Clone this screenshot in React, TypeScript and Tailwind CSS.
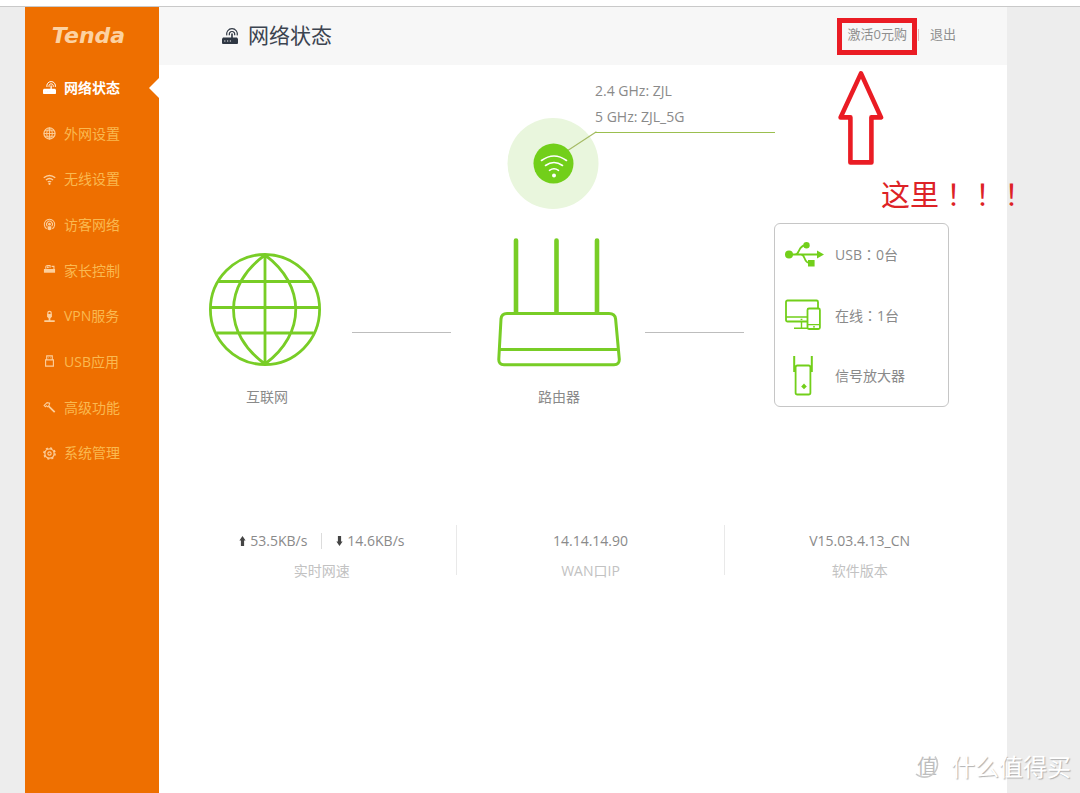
import type { ReactNode } from "react"

const RouterIcon = ({ className }: { className: string }) => (
    <svg viewBox="0 0 16 16" className={className} fill="none" stroke="currentColor" strokeWidth="1.4">
        <path d="M1 9.6H15L16 10.8V15Q16 16 15 16H1Q0 16 0 15V10.8Z" fill="currentColor" stroke="none" />
        <path d="M10 5.6V10" strokeWidth="1.6" />
        <path d="M7.5 7.2A2.7 2.7 0 1 1 12.5 7.2M4.9 7.4A5.3 5.3 0 1 1 15.1 7.4" strokeWidth="1.2" />
        <path d="M2.2 13H3.4M5 13H6.2M7.8 13H9" stroke="#f7f7f7" strokeWidth="1.1" />
    </svg>
)

const menu: { name: string, icon: ReactNode }[] = [
    {
        name: "外网设置",
        icon: <>
            <circle cx="7" cy="7" r="6" />
            <path d="M1 7H13M7 1V13M2 4H12M2 10H12M7 1C3 4 3 10 7 13M7 1C11 4 11 10 7 13" strokeWidth="1" />
        </>,
    },
    {
        name: "无线设置",
        icon: <>
            <path d="M.8 5.2Q7 0 13.2 5.2M3.2 7.6Q7 4.4 10.8 7.6M5.2 9.8Q7 8.2 8.8 9.8" strokeWidth="1.5" />
            <circle cx="7" cy="11.6" r="1.2" fill="currentColor" stroke="none" />
        </>,
    },
    {
        name: "访客网络",
        icon: <>
            <path d="M4 11.6A5.6 5.6 0 1 1 10 11.6M4.6 8.8A3.2 3.2 0 1 1 9.4 8.8" strokeWidth="1.1" />
            <circle cx="7" cy="6.6" r="1.5" fill="currentColor" stroke="none" />
            <path d="M5 9H9V12.4Q7 13.8 5 12.4Z" fill="currentColor" stroke="none" />
        </>,
    },
    {
        name: "家长控制",
        icon: <>
            <path d="M1 5.4H13V9.4H1Z" fill="currentColor" stroke="none" />
            <path d="M3 5V3Q3 1.6 5 1.6H7.6V4M9.2 2.6H11.8V6" strokeWidth="1.2" />
            <circle cx="5.2" cy="3.6" r="1.1" fill="currentColor" stroke="none" />
        </>,
    },
    {
        name: "VPN服务",
        icon: <>
            <path d="M5.2 4.4V3.2A1.8 1.8 0 0 1 8.8 3.2V4.4" />
            <path d="M4.4 4.2H9.6V7.4L8 9H6L4.4 7.4Z" fill="currentColor" stroke="none" />
            <path d="M7 8V11M1.4 12H12.6" strokeWidth="1.8" />
        </>,
    },
    {
        name: "USB应用",
        icon: <path d="M4 5V1H10V5M2.8 5.2H11.2V12H2.8ZM5.6 3H6.2M7.8 3H8.4" strokeWidth="1.2" />,
    },
    {
        name: "高级功能",
        icon: <>
            <path d="M1.2 4.8L4.4 1.8L7.2 2.4L6.6 4.6L4.8 6.2L3.6 5L2.6 6.2Z" strokeWidth="1.1" />
            <path d="M6 5.6L12.6 12" strokeWidth="1.9" />
        </>,
    },
    {
        name: "系统管理",
        icon: <>
            <circle cx="7" cy="7" r="5" />
            <circle cx="7" cy="7" r="6" strokeWidth="1.6" strokeDasharray="2.2 2.512" />
            <circle cx="7" cy="7" r="1.8" strokeWidth="1.2" />
        </>,
    },
]

const Sidebar = () => (
    <aside className="w-[134px] shrink-0 bg-[#ee6f00]">
        <div className="h-[58px] flex items-center justify-center pr-[7px] text-[22px] font-bold italic text-[#fcd2a2] font-['DejaVu_Sans',sans-serif]">
            Tenda
        </div>
        <ul className="flex flex-col h-[411px] text-sm">
            <li className="relative flex-1 flex items-center">
                <a href="#status" className="flex items-center gap-2 pl-[18px] font-bold text-white">
                    <RouterIcon className="size-[13px]" />
                    网络状态
                </a>
                <svg viewBox="0 0 10 20" className="absolute right-0 w-[10px] h-5">
                    <path d="M10 0V20L0 10Z" fill="#fff" />
                </svg>
            </li>
            {menu.map(item =>
                <li key={item.name} className="flex-1 flex items-center">
                    <a href="#" className="flex items-center gap-2 pl-[18px] text-[#fab950]">
                        <svg viewBox="0 0 14 14" className="size-[13px] text-[#fccf9c]" fill="none" stroke="currentColor" strokeWidth="1.3">
                            {item.icon}
                        </svg>
                        {item.name}
                    </a>
                </li>
            )}
        </ul>
    </aside>
)

const Header = () => (
    <header className="relative h-[58px] flex items-center justify-between bg-[#f7f7f7] pl-[63px] pr-[51px] pb-[3px]">
        <h1 className="flex items-center gap-[10px] text-[21px] text-[#3c4450]">
            <RouterIcon className="size-4 mt-[3px] text-[#2f3743]" />
            网络状态
        </h1>
        <nav className="flex items-center text-[13px] text-[#8f8f8f]">
            <button type="button">激活0元购</button>
            <span className="mx-[11px] h-3 w-px bg-[#e3b5b5]" />
            <button type="button">退出</button>
        </nav>

        <div className="absolute top-[11px] right-[90px] w-20 h-[37px] border-5 border-[#ea1c24]" />
        <svg viewBox="0 0 46 96" className="absolute top-[63px] right-[123px] w-[46px] h-24" fill="none" stroke="#ea1c24" strokeWidth="4.6" strokeLinejoin="round">
            <path d="M23 3.4L43 47.4H33.4V92.4H12.4V47.4H2.6Z" />
        </svg>
        <p className="absolute top-[166px] -right-[19px] text-[29px] leading-10 whitespace-nowrap text-[#dd2226] font-['Noto_Sans_CJK_TC',sans-serif]">
            这里！！！
        </p>
    </header>
)

const WifiCallout = () => (
    <div className="flex justify-center mt-[13px] pl-[116px]">
        <svg viewBox="0 0 92 92" className="size-[92px] mt-10 shrink-0" fill="none" stroke="#fff" strokeLinecap="round">
            <circle cx="46" cy="45.5" r="45.5" fill="#e9f6dd" stroke="none" />
            <path d="M60 33L89 14" stroke="#a6bb66" strokeWidth="1.2" />
            <circle cx="46.5" cy="45.5" r="20" fill="#72cf1a" stroke="none" />
            <path d="M34.5 42.5Q47 33.5 59.5 42.5M38.5 47.5Q47 41.5 55.5 47.5M42.5 52.3Q47 49.3 51.5 52.3" strokeWidth="1.6" />
            <circle cx="47" cy="57.4" r="2" fill="#fff" stroke="none" />
        </svg>
        <div className="-ml-1 w-[180px] h-[55px] border-b border-[#9bbf4f] leading-[26px]">
            <p>2.4 GHz: ZJL</p>
            <p>5 GHz: ZJL_5G</p>
        </div>
    </div>
)

const Colon = () => <span className="font-['Noto_Sans_CJK_TC',sans-serif]">：</span>

const Devices = () => (
    <ul className="w-[175px] h-[184px] shrink-0 flex flex-col justify-between pl-[10px] py-[10px] rounded-md border border-[#c6c6c6]">
        <li className="flex items-center gap-[11px] h-10">
            <svg viewBox="0 0 39 40" className="w-[39px] h-10" fill="none" stroke="#72cf1a" strokeWidth="1.8">
                <path d="M4 20.5H33M10 20.5C15 20.5 13 11.5 20 11.5M16 20.5C21 20.5 18 29 25 29" />
                <circle cx="4" cy="20.5" r="4" fill="#72cf1a" stroke="none" />
                <circle cx="21.5" cy="11.2" r="3.2" fill="#72cf1a" stroke="none" />
                <path d="M23 26H29.6V32.4H23ZM32 16.6L39 20.5L32 24.4Z" fill="#72cf1a" stroke="none" />
            </svg>
            <span>USB<Colon />0台</span>
        </li>
        <li className="flex items-center gap-[11px] h-10">
            <svg viewBox="0 0 39 40" className="w-[39px] h-10" fill="none" stroke="#72cf1a" strokeWidth="1.8">
                <rect x="1" y="5.5" width="32" height="21" rx="1.5" />
                <path d="M1 22H22M16.5 27V32.5M9 33.3H23" strokeWidth="1.4" />
                <rect x="22.5" y="13.5" width="12.4" height="20.5" rx="1.5" fill="#fff" />
                <path d="M22.5 29.6H35M28 31.8H30M15.6 24.3H17.4" strokeWidth="1.2" />
            </svg>
            <span>在线<Colon />1台</span>
        </li>
        <li className="flex items-center gap-[11px] h-10">
            <svg viewBox="0 0 39 40" className="w-[39px] h-10" fill="none" stroke="#72cf1a" strokeWidth="1.8">
                <path d="M9.2 0V15H10.4M26.8 0V15H25.6" strokeWidth="2" />
                <rect x="10.6" y="9.5" width="14.8" height="29" rx="1.8" />
                <path d="M19 27.6L21.8 30.4L19 33.2L16.2 30.4Z" fill="#72cf1a" stroke="none" />
            </svg>
            <span>信号放大器</span>
        </li>
    </ul>
)

const Topology = () => (
    <div className="flex items-end mt-[13px] pl-[50px] pr-[58px]">
        <figure className="flex flex-col items-center">
            <svg viewBox="0 0 112 114" className="w-28 h-[114px]" fill="none" stroke="#78cd26" strokeWidth="2.8">
                <ellipse cx="56" cy="56.5" rx="54.6" ry="55" />
                <path d="M56 2V111M2 54.5H110M9 28.5H103M7.5 80H104.5M56 2C14 32 14 81 56 111M56 2C97 32 97 81 56 111" />
            </svg>
            <figcaption className="mt-5 pl-1 leading-5">互联网</figcaption>
        </figure>
        <hr className="flex-1 ml-[31px] mr-[46px] mb-[74px] border-[#bdbdbd]" />
        <figure className="flex flex-col items-center">
            <svg viewBox="0 0 124 129" className="w-[124px] h-[129px]" fill="none" stroke="#78cd26" strokeWidth="3">
                <path d="M19 2.5V74M59.5 2.5V74M100 2.5V74" strokeWidth="4.6" strokeLinecap="round" />
                <path d="M10 75.500H112Q118 75.500 118.600 81L122.300 121Q122.600 126.800 117 126.800H7Q1.500 126.800 1.800 121L4 81Q4.500 75.500 10 75.500ZM3 111.500H121" />
            </svg>
            <figcaption className="mt-5 leading-5">路由器</figcaption>
        </figure>
        <hr className="flex-1 ml-6 mr-[30px] mb-[74px] border-[#bdbdbd]" />
        <Devices />
    </div>
)

const Arrow = ({ className }: { className?: string }) => (
    <svg viewBox="0 0 7 10" className={`w-[7px] h-[10px] ${className ?? ""}`} fill="#444">
        <path d="M3.5 0L6.6 4.4H5.1V10H1.9V4.4H.4Z" />
    </svg>
)

const Stat = ({ label, children }: { label: string, children: ReactNode }) => (
    <div className="pt-px text-center">
        <div className="flex items-center justify-center h-[30px]">{children}</div>
        <p className="leading-[30px] text-[#c2c2c2]">{label}</p>
    </div>
)

const Stats = () => (
    <section className="grid grid-cols-3 mt-[118px] pl-[29px] pr-[13px]">
        <div className="border-r border-[#e9e9e9] h-[50px]">
            <Stat label="实时网速">
                <Arrow />
                <span className="ml-1">53.5KB/s</span>
                <span className="mx-[14px] h-4 w-px bg-[#dcdcdc]" />
                <Arrow className="rotate-180" />
                <span className="ml-1">14.6KB/s</span>
            </Stat>
        </div>
        <div className="border-r border-[#e9e9e9] h-[50px]">
            <Stat label="WAN口IP">14.14.14.90</Stat>
        </div>
        <Stat label="软件版本">V15.03.4.13_CN</Stat>
    </section>
)

const Watermark = () => (
    <div className="absolute right-[9px] bottom-2 flex items-center gap-[10px] text-white [text-shadow:1px_1px_1px_#b0b0b0]">
        <div className="relative size-7 flex items-center justify-center text-xl text-[#bdbdbd] [text-shadow:none]">
            <svg viewBox="0 0 28 28" className="absolute inset-0" fill="none" stroke="#c9c9c9" strokeWidth="1.6">
                <path d="M22 3.5A13 13 0 0 1 3 21" />
            </svg>
            值
        </div>
        <span className="text-2xl leading-9">什么值得买</span>
    </div>
)

export default function App() {
    return (
        <div className="relative min-h-screen flex flex-col overflow-hidden bg-[#ededed] text-sm text-[#8a8a8a] font-['Open_Sans','Noto_Sans_CJK_SC',sans-serif]">
            <div className="h-[7px] bg-white border-b border-[#c9c9c9]" />
            <div className="flex-1 flex pl-[25px] pr-[73px]">
                <Sidebar />
                <main className="flex-1 bg-white">
                    <Header />
                    <WifiCallout />
                    <Topology />
                    <Stats />
                </main>
            </div>
            <Watermark />
        </div>
    )
}
